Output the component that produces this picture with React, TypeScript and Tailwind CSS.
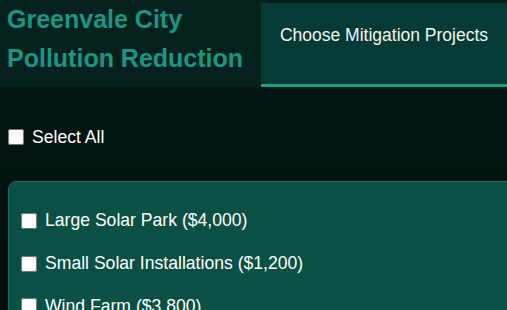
const projects = [
  { name: 'Large Solar Park', cost: 4000 },
  { name: 'Small Solar Installations', cost: 1200 },
  { name: 'Wind Farm', cost: 3800 },
];

export default function App() {
  return (
    <div
      className="min-h-screen w-full overflow-hidden bg-gradient-to-b from-[#031a16] to-[#020d0b] text-white"
      style={{ fontFamily: '"Liberation Sans", Arial, sans-serif' }}
    >
      {/* Header */}
      <header className="flex h-[87px] bg-[#04211e]">
        <h1 className="w-[261px] shrink-0 pl-[7px] text-[25px] font-bold leading-[39px] text-[#1a9682]">
          Greenvale City
          <br />
          Pollution Reduction
        </h1>
        <div className="mt-[3px] flex flex-1 items-center justify-center whitespace-nowrap border-b-[3px] border-[#17a086] bg-[#063a34] pb-[16px] text-[17.5px] text-[#f1f5f4]">
          Choose Mitigation Projects
        </div>
      </header>

      {/* Body */}
      <main className="pl-2 pt-[37px]">
        <label className="flex items-center gap-2 text-[17.6px]">
          <input type="checkbox" className="h-4 w-4" />
          Select All
        </label>

        <div className="mr-[-24px] mt-[31px] rounded-lg border border-[#1d6b5d] bg-[#0a5045] px-3 pt-[30px] pb-6">
          <div className="flex flex-col gap-[25px]">
            {projects.map((p) => (
              <label key={p.name} className="flex items-center gap-2 text-[17.6px] leading-none">
                <input type="checkbox" className="h-4 w-4" />
                {p.name} (${p.cost.toLocaleString('en-US')})
              </label>
            ))}
          </div>
        </div>
      </main>
    </div>
  );
}
